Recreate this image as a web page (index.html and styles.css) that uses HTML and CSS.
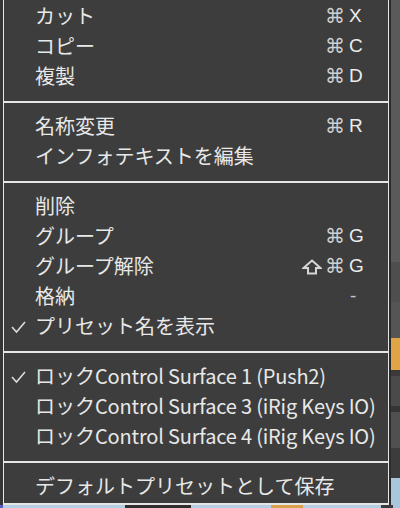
FILE: index.html
```html
<!DOCTYPE html>
<html lang="ja">
<head>
<meta charset="utf-8">
<link rel="stylesheet" href="styles.css">
</head>
<body>
<div class="screen">
  <div class="top">
    <div class="gutter"></div>
    <div class="menu">
      <div class="group">
        <div class="item"><span class="check"></span><span class="label">カット</span><span class="mods"><span class="cmd">⌘</span></span><span class="key">X</span></div>
        <div class="item"><span class="check"></span><span class="label">コピー</span><span class="mods"><span class="cmd">⌘</span></span><span class="key">C</span></div>
        <div class="item"><span class="check"></span><span class="label">複製</span><span class="mods"><span class="cmd">⌘</span></span><span class="key">D</span></div>
      </div>
      <div class="sep"></div>
      <div class="group">
        <div class="item"><span class="check"></span><span class="label">名称変更</span><span class="mods"><span class="cmd">⌘</span></span><span class="key">R</span></div>
        <div class="item"><span class="check"></span><span class="label">インフォテキストを編集</span><span class="mods"></span><span class="key"></span></div>
      </div>
      <div class="sep"></div>
      <div class="group">
        <div class="item"><span class="check"></span><span class="label">削除</span><span class="mods"></span><span class="key"></span></div>
        <div class="item"><span class="check"></span><span class="label">グループ</span><span class="mods"><span class="cmd">⌘</span></span><span class="key">G</span></div>
        <div class="item"><span class="check"></span><span class="label">グループ解除</span><span class="mods"><svg class="shift" width="20" height="16" viewBox="0 0 20 16"><polygon points="10,1.5 18.5,9 14,9 14,14.5 6,14.5 6,9 1.5,9" fill="none" stroke="#d6d6d6" stroke-width="2" stroke-linejoin="miter"/></svg><span class="cmd">⌘</span></span><span class="key">G</span></div>
        <div class="item"><span class="check"></span><span class="label">格納</span><span class="mods"></span><span class="key dash">-</span></div>
        <div class="item"><span class="check"><svg width="16" height="14" viewBox="0 0 16 14"><polyline points="1,7 5.5,12 14,2" fill="none" stroke="#dcdcdc" stroke-width="1.6"/></svg></span><span class="label">プリセット名を表示</span><span class="mods"></span><span class="key"></span></div>
      </div>
      <div class="sep"></div>
      <div class="group">
        <div class="item"><span class="check"><svg width="16" height="14" viewBox="0 0 16 14"><polyline points="1,7 5.5,12 14,2" fill="none" stroke="#dcdcdc" stroke-width="1.6"/></svg></span><span class="label">ロック<span class="latin">Control Surface 1 (Push2)</span></span><span class="mods"></span><span class="key"></span></div>
        <div class="item"><span class="check"></span><span class="label">ロック<span class="latin">Control Surface 3 (iRig Keys IO)</span></span><span class="mods"></span><span class="key"></span></div>
        <div class="item"><span class="check"></span><span class="label">ロック<span class="latin">Control Surface 4 (iRig Keys IO)</span></span><span class="mods"></span><span class="key"></span></div>
      </div>
      <div class="sep"></div>
      <div class="group">
        <div class="item"><span class="check"></span><span class="label">デフォルトプリセットとして保存</span><span class="mods"></span><span class="key"></span></div>
      </div>
    </div>
    <div class="side">
      <div class="side-edge"></div>
      <div class="side-col">
        <div class="blk b-gray1"></div>
        <div class="blk b-curve"></div>
        <div class="blk b-gray2"></div>
        <div class="blk b-orange"></div>
        <div class="blk b-dark1"></div>
        <div class="blk b-gray3"></div>
        <div class="blk b-dark2"></div>
        <div class="blk b-gray4"></div>
        <div class="blk b-dark3"></div>
        <div class="blk b-light"></div>
      </div>
    </div>
  </div>
  <div class="bottom">
    <div class="bt bt-blue"></div>
    <div class="bt bt-light1"></div>
    <div class="bt bt-dark"></div>
    <div class="bt bt-light2"></div>
    <div class="bt bt-orange"></div>
    <div class="bt bt-light3"></div>
    <div class="bt bt-dark2"></div>
    <div class="bt bt-light4"></div>
  </div>
</div>
</body>
</html>
```

FILE: styles.css
```css
* { box-sizing: border-box; }
html, body { margin: 0; padding: 0; }
body { background: #333333; }

.screen {
  width: 400px;
  height: 508px;
  overflow: hidden;
  display: flex;
  flex-direction: column;
  background: #333333;
}

.top {
  display: flex;
  height: 505px;
  flex: none;
}

.gutter {
  width: 3px;
  flex: none;
  background: #363636;
}

.menu {
  width: 386px;
  flex: none;
  background: #3d3d3d;
  border-left: 1px solid #e6e6e6;
  border-right: 1px solid #e6e6e6;
  border-bottom: 2px solid #e6e6e6;
  padding-top: 1px;
  display: flex;
  flex-direction: column;
  font-family: "Noto Sans CJK JP", "Noto Sans", sans-serif;
  font-size: 20px;
  color: #e8e8e8;
}

.sep {
  height: 2px;
  background: #e6e6e6;
  margin: 10px 0 8px;
  flex: none;
}

.item {
  height: 30px;
  display: flex;
  align-items: center;
  padding-right: 25px;
  white-space: nowrap;
}

.check {
  width: 31px;
  flex: none;
  display: flex;
  align-items: center;
  padding-left: 7px;
  padding-top: 2px;
}

.label {
  flex: 1;
  line-height: 30px;
}

.latin {
  font-family: "Noto Sans CJK JP", "Noto Sans", sans-serif;
  letter-spacing: -0.18px;
}

.mods {
  display: flex;
  align-items: center;
  justify-content: flex-end;
  gap: 3px;
}

.cmd {
  font-family: "DejaVu Sans", sans-serif;
  font-size: 20px;
  color: #cfcfcf;
  line-height: 30px;
}

.shift { display: block; margin-top: 1px; }

.key {
  width: 14px;
  margin-left: 4px;
  flex: none;
  font-family: "Liberation Sans", Arial, sans-serif;
  font-size: 19px;
  color: #ececec;
  line-height: 30px;
}

.dash {
  color: #c4c4c4;
  padding-left: 1px;
}

.side {
  flex: 1;
  display: flex;
}

.side-edge {
  width: 2px;
  background: #2c2c2c;
}

.side-col {
  flex: 1;
  display: flex;
  flex-direction: column;
  background: #5a5a5a;
}

.blk { flex: none; }
.b-gray1 { height: 262px; background: #5a5a5a; }
.b-curve { height: 40px; background: #4e4e4e; }
.b-gray2 { height: 36px; background: #555555; }
.b-orange { height: 32px; background: #e0a444; }
.b-dark1 { height: 6px; background: #3a3a3a; }
.b-gray3 { height: 30px; background: #4a4a4a; }
.b-dark2 { height: 6px; background: #353535; }
.b-gray4 { height: 36px; background: #505050; }
.b-dark3 { height: 30px; background: #3c3c3c; }
.b-light { flex: 1; background: #a9c7dc; }

.bottom {
  flex: 1;
  display: flex;
}
.bt { height: 100%; }
.bt-blue { width: 3px; background: #5a5ac8; }
.bt-light1 { width: 122px; background: #b2cfe3; }
.bt-dark { width: 66px; background: #2e2e2e; }
.bt-light2 { width: 80px; background: #b2cfe3; }
.bt-orange { width: 32px; background: #d9a24a; }
.bt-light3 { width: 78px; background: #b2cfe3; }
.bt-dark2 { width: 12px; background: #3a3a3a; }
.bt-light4 { flex: 1; background: #a9c7dc; }
```
